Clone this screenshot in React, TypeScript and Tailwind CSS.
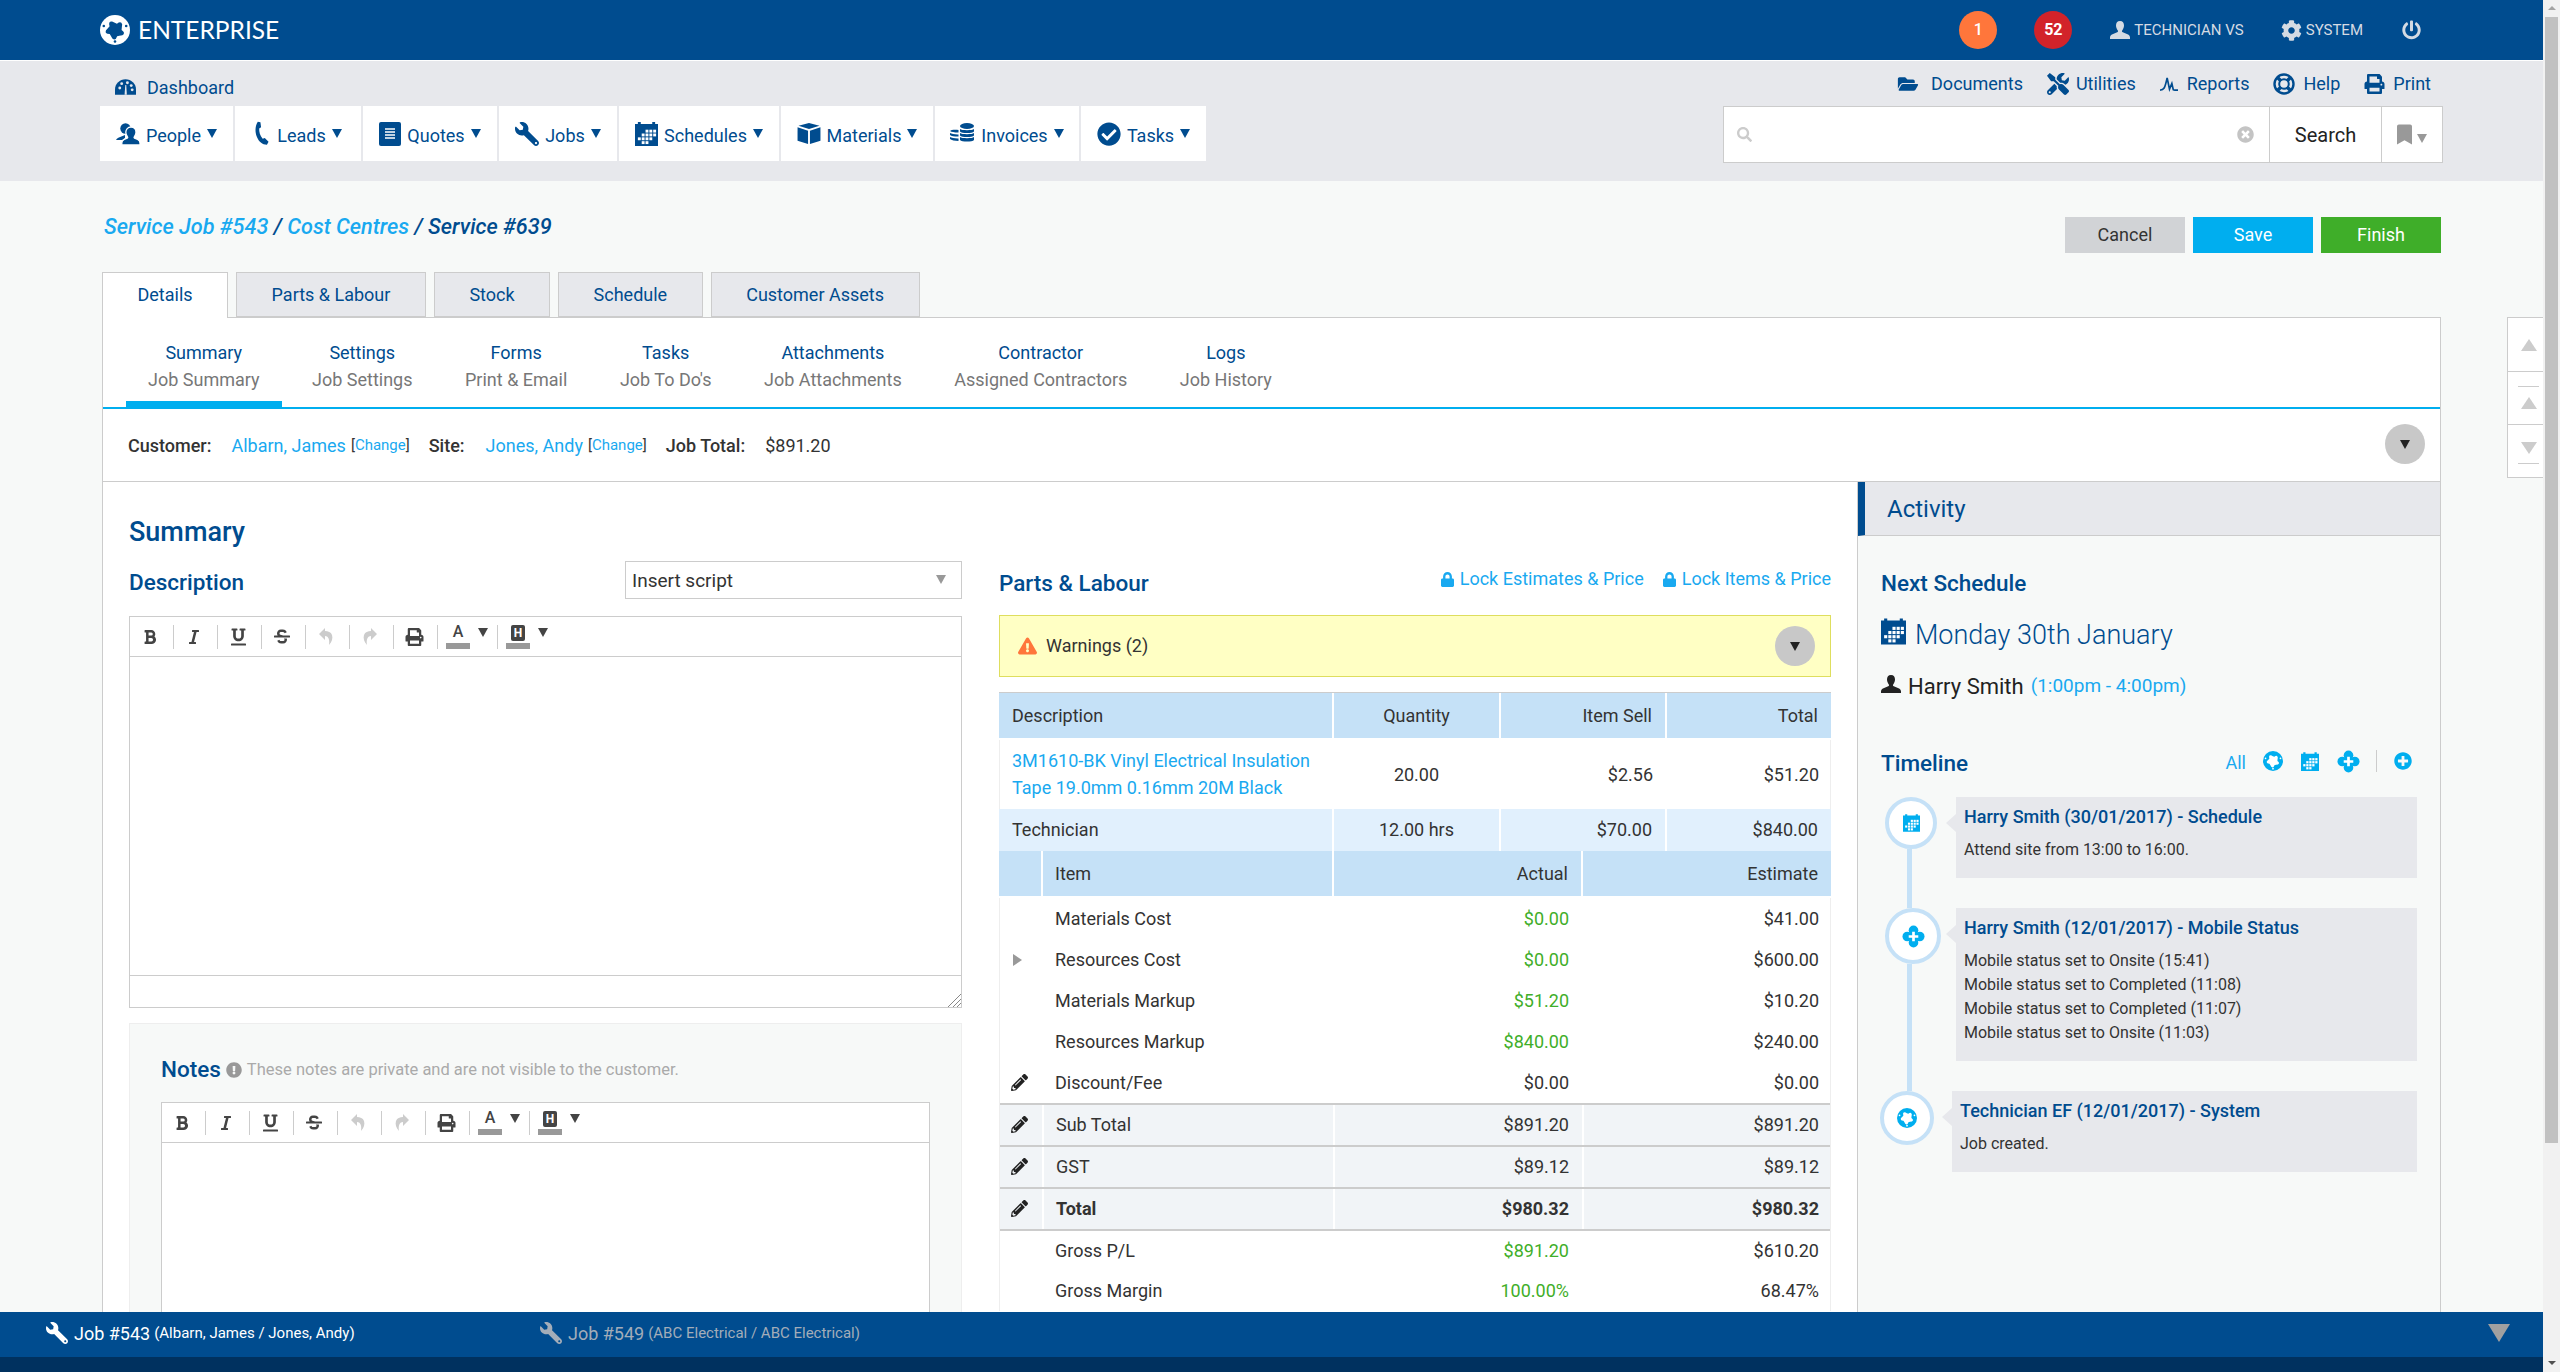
import type { ReactNode } from "react";
import {
  FaBold,
  FaBookmark,
  FaCheckCircle,
  FaCog,
  FaExclamationCircle,
  FaExclamationTriangle,
  FaFolderOpen,
  FaItalic,
  FaLock,
  FaPencilAlt,
  FaPlusCircle,
  FaPowerOff,
  FaPrint,
  FaSearch,
  FaStrikethrough,
  FaTimesCircle,
  FaTools,
  FaUnderline,
  FaWrench,
} from "react-icons/fa";

// five lobed cog used by the logo
function cogPath() {
  const lobes = 5;
  const pts: string[] = [];
  for (let i = 0; i < lobes; i++) {
    const a = (i / lobes) * Math.PI * 2 - Math.PI / 2 + 0.3;
    const b = a + Math.PI / lobes;
    const c = a + (Math.PI * 2) / lobes;
    const p = (ang: number, r: number) => `${(15 + Math.cos(ang) * r).toFixed(2)} ${(15 + Math.sin(ang) * r).toFixed(2)}`;
    if (i === 0) pts.push(`M${p(a, 6.6)}`);
    pts.push(`Q${p(a + 0.28, 11.4)} ${p(b, 9)}`);
    pts.push(`Q${p(b + 0.34, 7)} ${p(c, 6.6)}`);
  }
  return pts.join(" ") + "z";
}

function GearLogo({ className, hole = "#004c8f" }: { className?: string; hole?: string }) {
  return (
    <svg viewBox="0 0 30 30" className={className} fill="currentColor">
      <circle cx="15" cy="15" r="15" />
      <path d={cogPath()} fill={hole} />
      <circle cx="15" cy="26.500" r="1.300" fill={hole} />
      <circle cx="3.800" cy="11" r="1.300" fill={hole} />
      <circle cx="26.200" cy="11" r="1.300" fill={hole} />
    </svg>
  );
}

function UserBust({ className }: { className?: string }) {
  return (
    <svg viewBox="0 0 20 18" className={className} fill="currentColor">
      <path d="M10 0c2.800 0 4 2 4 4.500 0 2-1 3.800-1.800 5-.5.800-.2 1.500.6 1.800l4.700 2c1.500.6 2.500 1.800 2.500 3.200V18H0v-1.500c0-1.400 1-2.600 2.500-3.200l4.700-2c.8-.3 1.100-1 .6-1.800C7 8.300 6 6.500 6 4.500 6 2 7.200 0 10 0z" />
    </svg>
  );
}

function PeopleIcon({ className }: { className?: string }) {
  return (
    <svg viewBox="0 0 24 22" className={className} fill="currentColor">
      <circle cx="9.500" cy="5.500" r="5.200" />
      <path d="M0 17c.8-2 3.500-3 6-3.800l3-1.200v3l-3 2z" />
      <path d="M15 4c3.200 0 5 2.500 5 5.300 0 2-.8 3.500-1.700 4.600-.4.500-.2 1 .3 1.300l3 1.300c1.500.7 2.400 2 2.400 3.500V22H5.800v-2c0-1.500.9-2.800 2.400-3.500l3-1.300c.5-.3.700-.8.300-1.300-.9-1.100-1.700-2.600-1.700-4.600C9.800 6.500 11.800 4 15 4z" stroke="#fff" strokeWidth="1.300" />
    </svg>
  );
}

function PhoneIcon({ className }: { className?: string }) {
  return (
    <svg viewBox="0 0 18 26" className={className} fill="currentColor">
      <path d="M4 .5 6.800 1l.7 5.500-2 1.300c-.2 3.500.8 7.500 3.700 10.700l2.200-.8 4 4-1.700 3.300c-5-.3-8.500-3-10.700-8.500C1 11.500 1 5 4 .5z" />
    </svg>
  );
}

function QuoteIcon({ className }: { className?: string }) {
  return (
    <svg viewBox="0 0 22 24" className={className}>
      <rect width="22" height="24" rx="2" fill="currentColor" />
      <path d="M6 7h10M6 10h10M6 13h10M6 16h10" stroke="#fff" strokeWidth="1.400" />
    </svg>
  );
}

function CalendarIcon({ className, fill = "currentColor" }: { className?: string; fill?: string }) {
  return (
    <svg viewBox="0 0 24 25" className={className}>
      <path fill={fill} d="M0 2h3V0h3v2h12V0h3v2h3v23H0z" />
      <g fill="#fff">
        <rect x="11" y="8" width="3" height="3" />
        <rect x="15" y="8" width="3" height="3" />
        <rect x="19" y="8" width="3" height="3" />
        <rect x="7" y="12" width="3" height="3" />
        <rect x="11" y="12" width="3" height="3" />
        <rect x="15" y="12" width="3" height="3" />
        <rect x="19" y="12" width="3" height="3" />
        <rect x="3" y="16" width="3" height="3" />
        <rect x="7" y="16" width="3" height="3" />
        <rect x="11" y="16" width="3" height="3" />
        <rect x="15" y="16" width="3" height="3" />
        <rect x="7" y="20" width="3" height="3" />
        <rect x="11" y="20" width="3" height="3" />
      </g>
    </svg>
  );
}

function BoxIcon({ className }: { className?: string }) {
  return (
    <svg viewBox="0 0 24 22" className={className} fill="currentColor">
      <path d="M12 0 23 3l-11 3.300L1 3z" />
      <path d="M0 4.500 11 8v14L0 18.500z" />
      <path d="M24 4.500 13 8v14l11-3.500z" />
    </svg>
  );
}

function CoinsIcon({ className }: { className?: string }) {
  return (
    <svg viewBox="0 0 25 21" className={className} fill="currentColor">
      <ellipse cx="17" cy="3" rx="7" ry="3" />
      <path d="M10 6c1.500 1.600 12.500 1.600 14 0v2.500c-1.500 2-12.500 2-14 0zM10 10c1.500 1.600 12.500 1.600 14 0v2.500c-1.500 2-12.500 2-14 0zM10 14c1.500 1.600 12.500 1.600 14 0v3c-1.500 2-12.500 2-14 0z" />
      <path d="M8.500 7v2.500C5 9.600 1.500 9 0 8c.8-1 4.500-1.500 8.500-1zM0 10c1.500 1 5 1.500 8.500 1.400v2.200C5 13.700 1.200 13 0 12zM0 14c1.500 1 5 1.500 8.500 1.400V18C5 18 1.200 17 0 16z" />
    </svg>
  );
}

function DashIcon({ className }: { className?: string }) {
  return (
    <svg viewBox="0 0 22 16" className={className}>
      <path fill="currentColor" d="M11 0c6 0 11 4.700 11 10.500V16H0v-5.500C0 4.700 5 0 11 0z" />
      <g fill="#e7e8ec">
        <circle cx="5" cy="9" r="1.500" />
        <circle cx="7" cy="4.500" r="1.500" />
        <circle cx="13" cy="3.500" r="1.500" />
        <circle cx="17" cy="6.500" r="1.500" />
        <circle cx="18" cy="11" r="1.500" />
        <path d="M10 16 10.800 6h1l.6 10z" />
      </g>
    </svg>
  );
}

function ReportIcon({ className }: { className?: string }) {
  return (
    <svg viewBox="0 0 20 18" className={className} fill="none" stroke="currentColor" strokeWidth="1.800">
      <path d="M0 16c4 0 5-1.500 7.500-13L10 15l2.500-6 1.500 6.500c1 .5 3 .5 5 .5" />
    </svg>
  );
}

function RingIcon({ className }: { className?: string }) {
  return (
    <svg viewBox="0 0 22 22" className={className} fill="none" stroke="currentColor">
      <circle cx="11" cy="11" r="9.500" strokeWidth="2.400" />
      <circle cx="11" cy="11" r="4.800" strokeWidth="2" />
      <path d="m4 4 4 4M18 4l-4 4M4 18l4-4M18 18l-4-4" strokeWidth="3.400" />
    </svg>
  );
}

function BlobPlusIcon({ className }: { className?: string }) {
  return (
    <svg viewBox="0 0 24 24" className={className}>
      <g fill="currentColor">
        <circle cx="12" cy="5.500" r="5" />
        <circle cx="18.500" cy="12" r="5" />
        <circle cx="12" cy="18.500" r="5" />
        <circle cx="5.500" cy="12" r="5" />
        <rect x="8" y="8" width="8" height="8" />
      </g>
      <path d="M12 7v10M7 12h10" stroke="#fff" strokeWidth="2.800" />
    </svg>
  );
}

function UndoIcon({ className }: { className?: string }) {
  return (
    <svg viewBox="0 0 14 17" className={className} fill="currentColor">
      <path d="M6 0 0 6l6 6V8c3 0 5 3 4 9 3-3 4-7 3-10-1-3-4-4-7-4z" />
    </svg>
  );
}

function Caret({ className }: { className?: string }) {
  return <span className={`inline-block w-0 h-0 border-x-[5.5px] border-t-[9px] border-x-transparent ${className ?? "border-t-[#004c8f]"}`} />;
}

function UpTri({ className }: { className?: string }) {
  return <span className={`block w-0 h-0 border-x-[8px] border-x-transparent ${className}`} />;
}

const menu: { label: string; icon: ReactNode; width: string }[] = [
  { label: "People", icon: <PeopleIcon className="w-6 h-[22px]" />, width: "w-[133px]" },
  { label: "Leads", icon: <PhoneIcon className="w-[17px] h-[25px]" />, width: "w-[126px]" },
  { label: "Quotes", icon: <QuoteIcon className="w-[22px] h-6" />, width: "w-[134px]" },
  { label: "Jobs", icon: <FaWrench className="w-6 h-6 -scale-x-100" />, width: "w-[118px]" },
  { label: "Schedules", icon: <CalendarIcon className="w-[23px] h-6" />, width: "w-[160px]" },
  { label: "Materials", icon: <BoxIcon className="w-6 h-[21px]" />, width: "w-[152px]" },
  { label: "Invoices", icon: <CoinsIcon className="w-[25px] h-[21px]" />, width: "w-[144px]" },
  { label: "Tasks", icon: <FaCheckCircle className="w-6 h-6" />, width: "w-[125px]" },
];

const subLinks: { label: string; icon: ReactNode; gap: string }[] = [
  { label: "Documents", icon: <FaFolderOpen className="w-[22px] h-[18px]" />, gap: "gap-[12px]" },
  { label: "Utilities", icon: <FaTools className="w-[22px] h-[22px]" />, gap: "gap-[7px]" },
  { label: "Reports", icon: <ReportIcon className="w-[19px] h-[17px]" />, gap: "gap-[8px]" },
  { label: "Help", icon: <RingIcon className="w-[22px] h-[22px]" />, gap: "gap-[8px]" },
  { label: "Print", icon: <FaPrint className="w-[21px] h-[20px]" />, gap: "gap-[8px]" },
];

const subTabs = [
  ["Summary", "Job Summary"],
  ["Settings", "Job Settings"],
  ["Forms", "Print & Email"],
  ["Tasks", "Job To Do's"],
  ["Attachments", "Job Attachments"],
  ["Contractor", "Assigned Contractors"],
  ["Logs", "Job History"],
];

const costRows = [
  { item: "Materials Cost", actual: "$0.00", estimate: "$41.00" },
  { item: "Resources Cost", actual: "$0.00", estimate: "$600.00", expand: true },
  { item: "Materials Markup", actual: "$51.20", estimate: "$10.20" },
  { item: "Resources Markup", actual: "$840.00", estimate: "$240.00" },
];

const totalRows = [
  { item: "Sub Total", actual: "$891.20", estimate: "$891.20" },
  { item: "GST", actual: "$89.12", estimate: "$89.12" },
  { item: "Total", actual: "$980.32", estimate: "$980.32", bold: true },
];

const timeline = [
  {
    title: "Harry Smith (30/01/2017) - Schedule",
    lines: ["Attend site from 13:00 to 16:00."],
    icon: <CalendarIcon className="w-[17px] h-[18px]" fill="#00aeef" />,
    col: "w-[75px]",
    circle: "w-[52px] h-[52px] ml-1",
    line: true,
  },
  {
    title: "Harry Smith (12/01/2017) - Mobile Status",
    lines: [
      "Mobile status set to Onsite (15:41)",
      "Mobile status set to Completed (11:08)",
      "Mobile status set to Completed (11:07)",
      "Mobile status set to Onsite (11:03)",
    ],
    icon: <BlobPlusIcon className="w-[23px] h-[23px] text-[#00aeef]" />,
    col: "w-[75px]",
    circle: "w-14 h-14 ml-1",
    line: true,
  },
  {
    title: "Technician EF (12/01/2017) - System",
    lines: ["Job created."],
    icon: <GearLogo className="w-5 h-5 text-[#00aeef]" hole="#fff" />,
    col: "w-[71px]",
    circle: "w-[54px] h-[54px] -ml-px",
    line: false,
  },
];

function Toolbar() {
  const sep = "w-px h-6 bg-[#ccc]";
  const cell = "w-[43px] pr-[3px] flex items-center justify-center";
  return (
    <div className="h-10 shrink-0 flex items-center border-b border-[#ccc] text-[#444]">
      <div className={cell}><FaBold className="w-3 h-4" /></div>
      <div className={sep} />
      <div className={cell}><FaItalic className="w-[14px] h-4" /></div>
      <div className={sep} />
      <div className={cell}><FaUnderline className="w-[15px] h-[18px]" /></div>
      <div className={sep} />
      <div className={cell}><FaStrikethrough className="w-4 h-[17px]" /></div>
      <div className={sep} />
      <div className={`${cell} text-[#ccc]`}><UndoIcon className="w-[14px] h-[17px]" /></div>
      <div className={sep} />
      <div className={`${cell} text-[#ccc]`}><UndoIcon className="w-[14px] h-[17px] -scale-x-100" /></div>
      <div className={sep} />
      <div className={cell}><FaPrint className="w-[19px] h-[18px]" /></div>
      <div className={sep} />
      <div className="w-[59px] flex items-center pl-[8px] gap-[8px]">
        <div className="flex flex-col items-center w-6 leading-none">
          <span className="text-[16px] h-[17px] font-medium">A</span>
          <span className="w-6 h-[6px] bg-[#999] mt-[2px]" />
        </div>
        <Caret className="border-t-[#444] -mt-2" />
      </div>
      <div className={sep} />
      <div className="w-[59px] flex items-center pl-[8px] gap-[8px]">
        <div className="flex flex-col items-center w-6">
          <span className="w-[14px] h-[16px] rounded-[2px] bg-[#444] text-white text-[12px] font-bold leading-[16px] text-center">H</span>
          <span className="w-6 h-[6px] bg-[#999] mt-[2px]" />
        </div>
        <Caret className="border-t-[#444] -mt-2" />
      </div>
    </div>
  );
}

function Grip() {
  return (
    <svg viewBox="0 0 14 14" className="absolute right-0 bottom-0 w-[14px] h-[14px] text-[#888]" fill="none" stroke="currentColor">
      <path d="M1 14 14 1M6 14l8-8M10 14l4-4" />
    </svg>
  );
}

function Money({ green, children }: { green?: boolean; children: ReactNode }) {
  return <div className={`px-[13px] text-right ${green ? "text-[#3fae29]" : ""}`}>{children}</div>;
}

export default function App() {
  return (
    <div className="w-[2560px] h-[1372px] flex overflow-hidden text-[18px] text-[#333] [font-family:Roboto,'Liberation_Sans',sans-serif]">
      <div className="w-[2543px] h-full flex flex-col">
        {/* top bar */}
        <header className="h-[61px] shrink-0 bg-[#004c8f] border-b border-white pl-[100px] pr-[122px] flex items-center justify-between text-white">
          <div className="flex items-center gap-2">
            <GearLogo className="w-[30px] h-[30px] text-white" />
            <span className="text-[24.5px] [font-family:Lato,sans-serif]">ENTERPRISE</span>
          </div>
          <div className="flex items-center text-[#d5dbe3]">
            <span className="w-[38px] h-[38px] rounded-full bg-[#ff763b] text-white text-[16px] font-medium flex items-center justify-center">1</span>
            <span className="w-[38px] h-[38px] ml-[37px] rounded-full bg-[#d2232a] text-white text-[16px] font-bold flex items-center justify-center">52</span>
            <UserBust className="w-5 h-5 ml-[38px]" />
            <span className="ml-[4px] text-[15px]">TECHNICIAN VS</span>
            <FaCog className="w-[21px] h-[21px] ml-[37px]" />
            <span className="ml-[4px] text-[15px]">SYSTEM</span>
            <FaPowerOff className="w-[19px] h-[20px] ml-[39px]" />
          </div>
        </header>

        {/* secondary nav */}
        <nav className="h-[120px] shrink-0 bg-[#e7e8ec] px-[100px] flex justify-between text-[#004c8f]">
          <div>
            <div className="h-[45px] pl-[15px] pt-[7px] flex items-center gap-[11px]">
              <DashIcon className="w-[21px] h-[16px]" />
              <span>Dashboard</span>
            </div>
            <div className="flex gap-[2px] h-[55px]">
              {menu.map((m) => (
                <div key={m.label} className={`${m.width} bg-white flex items-center justify-center gap-[6px]`}>
                  {m.icon}
                  <span className="mt-[3px]">{m.label}</span>
                  <Caret />
                </div>
              ))}
            </div>
          </div>
          <div className="flex flex-col items-end">
            <div className="h-[45px] flex items-center gap-[24px] pr-[12px]">
              {subLinks.map((l) => (
                <div key={l.label} className={`flex items-center ${l.gap}`}>
                  {l.icon}
                  <span>{l.label}</span>
                </div>
              ))}
            </div>
            <div className="w-[720px] h-[57px] bg-white border border-[#ccc] flex items-center text-[#222]">
              <FaSearch className="w-[15px] h-[15px] ml-[13px] text-[#ccc]" />
              <div className="flex-1" />
              <FaTimesCircle className="w-[17px] h-[17px] mr-[15px] text-[#c4c4c4]" />
              <div className="w-[113px] h-full border-x border-[#ccc] flex items-center justify-center text-[20px]">Search</div>
              <div className="flex-1 max-w-[60px] flex items-center justify-center gap-[5px] text-[#999]">
                <FaBookmark className="w-[15px] h-[23px]" />
                <Caret className="border-t-[#999] mt-2" />
              </div>
            </div>
          </div>
        </nav>

        {/* page */}
        <main className="flex-1 min-h-0 overflow-hidden relative bg-[#f7f9f8] pl-[102px] pr-[102px]">
          <div className="pt-[36px] flex justify-between">
            <div className="text-[21.7px] italic font-medium text-[#004c8f] -mt-[6px] ml-[2px]">
              <span className="text-[#19a9f0]">Service Job #543</span> / <span className="text-[#19a9f0]">Cost Centres</span> / Service #639
            </div>
            <div className="flex gap-2 text-[18px]">
              <div className="w-[120px] h-9 pb-[2px] bg-[#d1d3d6] flex items-center justify-center">Cancel</div>
              <div className="w-[120px] h-9 pb-[2px] bg-[#00aeef] text-white flex items-center justify-center">Save</div>
              <div className="w-[120px] h-9 pb-[2px] bg-[#3fae29] text-white flex items-center justify-center">Finish</div>
            </div>
          </div>

          <div className="mt-[19px] flex gap-2 relative z-10 -mb-px text-[#004c8f]">
            <div className="h-[46px] px-[34.5px] pb-[2px] bg-white border border-b-0 border-[#ccc] flex items-center">Details</div>
            {["Parts & Labour", "Stock", "Schedule", "Customer Assets"].map((t) => (
              <div key={t} className="h-[45px] px-[34.5px] bg-[#e7e8ec] border border-[#ccc] flex items-center">{t}</div>
            ))}
          </div>

          {/* card */}
          <section className="bg-white border border-[#ccc]">
            <div className="h-[91px] pl-[23px] flex gap-[8.5px] border-b-2 border-[#00aeef]">
              {subTabs.map(([a, b], i) => (
                <div key={a} className={`px-[22px] pt-[21px] text-center leading-[27px] ${i === 0 ? "border-b-[6px] border-[#00aeef]" : ""}`}>
                  <div className="text-[#004c8f]">{a}</div>
                  <div className="text-[#777]">{b}</div>
                </div>
              ))}
            </div>

            <div className="h-[73px] pl-[25px] pr-[15px] flex items-center border-b border-[#ccc]">
              <b className="font-medium">Customer:</b>
              <span className="ml-[20px] text-[#19a9f0]">Albarn, James</span>
              <span className="ml-[5px] text-[15px]">[<span className="text-[#19a9f0]">Change</span>]</span>
              <b className="ml-[19px] font-medium">Site:</b>
              <span className="ml-[21px] text-[#19a9f0]">Jones, Andy</span>
              <span className="ml-[5px] text-[15px]">[<span className="text-[#19a9f0]">Change</span>]</span>
              <b className="ml-[19px] font-medium">Job Total:</b>
              <span className="ml-[20px]">$891.20</span>
              <div className="ml-auto w-10 h-10 -mt-[2px] rounded-full bg-[#c8c8c8] flex items-center justify-center">
                <Caret className="border-t-[#222]" />
              </div>
            </div>

            <div className="flex items-stretch">
              {/* left + middle */}
              <div className="w-[1754px] shrink-0 pl-[26px] pr-[26px] flex gap-[37px]">
                <div className="w-[833px] shrink-0 pt-[35px]">
                  <h2 className="h-[30px] leading-[30px] text-[27px] font-medium text-[#004c8f]">Summary</h2>
                  <div className="mt-[14px] h-[38px] flex justify-between items-center">
                    <h3 className="pt-[5px] text-[22.5px] font-medium text-[#004c8f]">Description</h3>
                    <div className="w-[337px] h-[38px] border border-[#ccc] flex justify-between pl-[6px] pr-[15px] pt-[5px] text-[19px]">
                      <span>Insert script</span>
                      <Caret className="border-t-[#999] mt-[8px]" />
                    </div>
                  </div>
                  <div className="mt-[17px] h-[392px] border border-[#ccc] flex flex-col">
                    <Toolbar />
                    <div className="flex-1" />
                    <div className="h-8 border-t border-[#ccc] relative"><Grip /></div>
                  </div>
                  <div className="mt-[15px] h-[340px] bg-[#f7f9f8] border border-[#eee] px-[31px] pt-[32px]">
                    <div className="h-[28px] flex items-center gap-[5px]">
                      <h3 className="text-[22.5px] font-medium text-[#004c8f]">Notes</h3>
                      <FaExclamationCircle className="w-4 h-4 text-[#999]" />
                      <span className="text-[16.5px] text-[#aaa]">These notes are private and are not visible to the customer.</span>
                    </div>
                    <div className="mt-[18px] h-[280px] bg-white border border-[#ccc]">
                      <Toolbar />
                    </div>
                  </div>
                </div>

                <div className="w-[832px] shrink-0 pt-[79px]">
                  <div className="h-[54px] flex justify-between pt-[4px]">
                    <h3 className="text-[22.5px] font-medium text-[#004c8f] leading-[36px]">Parts &amp; Labour</h3>
                    <div className="flex gap-[19px] text-[#19a9f0] leading-[28px]">
                      <span className="flex items-center h-[28px] gap-[6px]"><FaLock className="w-[13px] h-[15px]" />Lock Estimates &amp; Price</span>
                      <span className="flex items-center h-[28px] gap-[6px]"><FaLock className="w-[13px] h-[15px]" />Lock Items &amp; Price</span>
                    </div>
                  </div>

                  <div className="h-[62px] bg-[#ffffc4] border border-[#dede5e] pl-[18px] pr-[15px] flex items-center">
                    <FaExclamationTriangle className="w-[19px] h-[18px] text-[#ff763b]" />
                    <span className="ml-[9px] -mt-px">Warnings (2)</span>
                    <div className="ml-auto w-10 h-10 rounded-full bg-[#c8c8c8] flex items-center justify-center">
                      <Caret className="border-t-[#222]" />
                    </div>
                  </div>

                  {/* parts table */}
                  <div className="mt-[15px] border-t border-[#ccc]">
                    <div className="grid grid-cols-[333px_167px_166px_166px] h-[47px] items-stretch bg-[#c5e1f7] border-b-2 border-white">
                      <div className="pl-[13px] flex items-center">Description</div>
                      <div className="border-l-2 border-white flex items-center justify-center">Quantity</div>
                      <div className="border-l-2 border-white flex items-center justify-end pr-[13px]">Item Sell</div>
                      <div className="border-l-2 border-white flex items-center justify-end pr-[13px]">Total</div>
                    </div>
                    <div className="grid grid-cols-[333px_167px_166px_166px] h-[69px] items-center border-x border-[#eee]">
                      <div className="pl-[12px] pr-2 pb-px leading-[27px] text-[#19a9f0]">3M1610-BK Vinyl Electrical Insulation Tape 19.0mm 0.16mm 20M Black</div>
                      <div className="text-center">20.00</div>
                      <div className="text-right pr-[13px]">$2.56</div>
                      <div className="text-right pr-[13px]">$51.20</div>
                    </div>
                    <div className="grid grid-cols-[333px_167px_166px_166px] h-[42px] items-stretch bg-[#e1f0fd]">
                      <div className="pl-[13px] pb-[2px] flex items-center">Technician</div>
                      <div className="border-l-2 border-white pb-[2px] flex items-center justify-center">12.00 hrs</div>
                      <div className="border-l-2 border-white pb-[2px] flex items-center justify-end pr-[13px]">$70.00</div>
                      <div className="border-l-2 border-white pb-[2px] flex items-center justify-end pr-[13px]">$840.00</div>
                    </div>
                    <div className="grid grid-cols-[42px_291px_249px_250px] h-[47px] items-stretch bg-[#c5e1f7] border-b-2 border-white">
                      <div />
                      <div className="border-l-2 border-white pl-[12px] flex items-center">Item</div>
                      <div className="border-l-2 border-white flex items-center justify-end pr-[13px]">Actual</div>
                      <div className="border-l-2 border-white flex items-center justify-end pr-[13px]">Estimate</div>
                    </div>
                    <div className="border-x border-[#eee]">
                      {costRows.map((r) => (
                        <div key={r.item} className="grid grid-cols-[42px_291px_249px_250px] h-[41px] items-center">
                          <div className="pl-[13px]">
                            {r.expand && <span className="block w-0 h-0 border-y-[6px] border-l-[9px] border-y-transparent border-l-[#999]" />}
                          </div>
                          <div className="pl-[13px]">{r.item}</div>
                          <Money green>{r.actual}</Money>
                          <Money>{r.estimate}</Money>
                        </div>
                      ))}
                      <div className="grid grid-cols-[42px_291px_249px_250px] h-[41px] items-center">
                        <div className="pl-[11px]"><FaPencilAlt className="w-[17px] h-[17px] text-[#222]" /></div>
                        <div className="pl-[13px]">Discount/Fee</div>
                        <Money>$0.00</Money>
                        <Money>$0.00</Money>
                      </div>
                      {totalRows.map((r) => (
                        <div key={r.item} className={`grid grid-cols-[42px_291px_249px_250px] h-[42px] items-stretch bg-[#f1f4f7] border-t-2 border-[#ccc] ${r.bold ? "font-bold" : ""}`}>
                          <div className="pl-[11px] pb-[2px] flex items-center"><FaPencilAlt className="w-[17px] h-[17px] text-[#222]" /></div>
                          <div className="border-l-2 border-white pl-[12px] pb-[2px] flex items-center">{r.item}</div>
                          <div className="border-l-2 border-white pb-[2px] flex items-center justify-end pr-[13px]">{r.actual}</div>
                          <div className="border-l-2 border-white pb-[2px] flex items-center justify-end pr-[13px]">{r.estimate}</div>
                        </div>
                      ))}
                      <div className="grid grid-cols-[42px_291px_249px_250px] h-[41px] items-center border-t-2 border-[#ccc]">
                        <div />
                        <div className="pl-[13px]">Gross P/L</div>
                        <Money green>$891.20</Money>
                        <Money>$610.20</Money>
                      </div>
                      <div className="grid grid-cols-[42px_291px_249px_250px] h-[41px] items-center">
                        <div />
                        <div className="pl-[13px]">Gross Margin</div>
                        <Money green>100.00%</Money>
                        <Money>68.47%</Money>
                      </div>
                    </div>
                  </div>
                </div>
              </div>

              {/* activity */}
              <aside className="flex-1 bg-[#f7f9f8] border-l border-[#ccc]">
                <div className="h-[54px] bg-[#e7e8ec] border-l-[7px] border-l-[#004c8f] border-b border-[#ccc] pl-[22px] flex items-center text-[24px] text-[#004c8f]">Activity</div>
                <div className="pl-[23px] pr-[23px] pt-[34px]">
                  <h3 className="h-[26px] leading-[26px] text-[22.5px] font-medium text-[#004c8f]">Next Schedule</h3>
                  <div className="mt-[23px] h-8 flex items-center gap-[9px] text-[#004c8f]">
                    <CalendarIcon className="w-[25px] h-[27px] -mt-2" />
                    <span className="text-[27px] font-light">Monday 30th January</span>
                  </div>
                  <div className="mt-[20px] h-[30px] flex items-center">
                    <UserBust className="w-5 h-5 -mt-1 text-[#222]" />
                    <span className="ml-[7px] text-[22px] text-[#222]">Harry Smith</span>
                    <span className="ml-[7px] text-[19px] text-[#19a9f0]">(1:00pm - 4:00pm)</span>
                  </div>
                  <div className="mt-[49px] h-7 flex items-center pr-[5px]">
                    <h3 className="text-[22.5px] font-medium text-[#004c8f]">Timeline</h3>
                    <div className="ml-auto flex items-center -mt-[6px]">
                      <span className="text-[#19a9f0] mt-[3px]">All</span>
                      <GearLogo className="ml-[17px] w-[20px] h-[20px] text-[#00aeef]" hole="#fff" />
                      <CalendarIcon className="ml-[18px] w-[18px] h-[19px]" fill="#00aeef" />
                      <BlobPlusIcon className="ml-[18px] w-[23px] h-[23px] text-[#00aeef]" />
                      <span className="ml-[16px] w-px h-[22px] bg-[#ccc]" />
                      <FaPlusCircle className="ml-[17px] w-[18px] h-[18px] text-[#00aeef]" />
                    </div>
                  </div>

                  <div className="mt-[19px]">
                    {timeline.map((t) => (
                      <div key={t.title} className="flex items-stretch">
                        <div className={`${t.col} shrink-0 flex flex-col`}>
                          <div className={`${t.circle} shrink-0 rounded-full bg-white border-4 border-[#c5e1f7] flex items-center justify-center`}>{t.icon}</div>
                          {t.line && <div className="w-[5px] ml-[26px] flex-1 bg-[#c5e1f7]" />}
                        </div>
                        <div className="flex-1 mb-[30px] bg-[#e7e8ec] pl-2 pt-2 pb-4 relative">
                          <span className="absolute -left-[10px] top-[17px] w-0 h-0 border-y-[9px] border-r-[10px] border-y-transparent border-r-[#e7e8ec]" />
                          <div className="h-6 leading-6 font-medium text-[#004c8f]">{t.title}</div>
                          <div className="mt-[9px] text-[16px] leading-6">
                            {t.lines.map((l) => (
                              <div key={l}>{l}</div>
                            ))}
                          </div>
                        </div>
                      </div>
                    ))}
                  </div>
                </div>
              </aside>
            </div>
          </section>

          {/* scroll-to handles */}
          <div className="absolute right-0 top-[136px] w-9 h-[161px] bg-white border border-r-0 border-[#ccc] flex flex-col">
            <div className="h-[53px] flex items-center justify-center pl-[6px]">
              <UpTri className="border-b-[12px] border-b-[#ccc]" />
            </div>
            <div className="h-[53px] border-t border-[#ccc] flex flex-col items-center pl-[6px] pt-[14px] gap-[10px]">
              <span className="w-[21px] h-px bg-[#ccc]" />
              <UpTri className="border-b-[12px] border-b-[#ccc]" />
            </div>
            <div className="flex-1 border-t border-[#ccc] flex flex-col items-center pl-[6px] pt-[17px] gap-[9px]">
              <UpTri className="border-t-[12px] border-t-[#ccc]" />
              <span className="w-[21px] h-px bg-[#ccc]" />
            </div>
          </div>
        </main>

        {/* open job tray */}
        <footer className="h-[60px] shrink-0 flex flex-col bg-[#00315f]">
          <div className="h-[45px] bg-[#004c8f] pl-[46px] pr-[33px] pb-[3px] flex items-center">
            <div className="w-[494px] flex items-center text-white">
              <FaWrench className="w-[22px] h-[22px] -scale-x-100" />
              <span className="ml-[6px]">Job #543</span>
              <span className="ml-[4px] text-[15px]">(Albarn, James / Jones, Andy)</span>
            </div>
            <div className="flex items-center text-[#a3adb9]">
              <FaWrench className="w-[22px] h-[22px] -scale-x-100" />
              <span className="ml-[6px]">Job #549</span>
              <span className="ml-[4px] text-[15px]">(ABC Electrical / ABC Electrical)</span>
            </div>
            <span className="ml-auto w-0 h-0 border-x-[11px] border-t-[18px] border-x-transparent border-t-[#a0a0a0]" />
          </div>
        </footer>
      </div>

      {/* scrollbar */}
      <div className="w-[17px] h-full bg-[#f1f1f1] flex flex-col items-center">
        <span className="mt-[6px] w-0 h-0 border-x-[4px] border-b-[4px] border-x-transparent border-b-[#a3a3a3]" />
        <div className="mt-[7px] w-[13px] h-[1126px] bg-[#c1c1c1]" />
        <span className="mt-auto mb-[7px] w-0 h-0 border-x-[4px] border-t-[4px] border-x-transparent border-t-[#505050]" />
      </div>
    </div>
  );
}
